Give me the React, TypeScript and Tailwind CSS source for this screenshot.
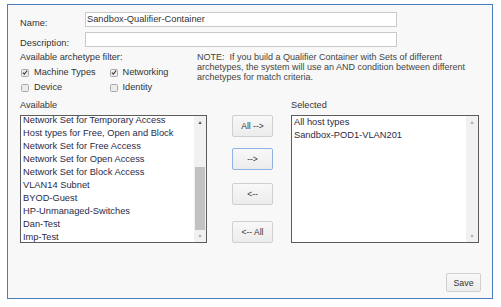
const available = [
  'Network Set for Temporary Access',
  'Host types for Free, Open and Block',
  'Network Set for Free Access',
  'Network Set for Open Access',
  'Network Set for Block Access',
  'VLAN14 Subnet',
  'BYOD-Guest',
  'HP-Unmanaged-Switches',
  'Dan-Test',
  'Imp-Test',
]

const selected = ['All host types', 'Sandbox-POD1-VLAN201']

function Checkbox({ checked, label }: { checked: boolean; label: string }) {
  return (
    <div className="flex items-center h-[15px] w-[90px]">
      <span className="ml-[1px] flex h-[8px] w-[8px] items-center justify-center rounded-[1.5px] border border-[#a9a9a9] bg-[#ececec]">
        {checked && (
          <svg width="7" height="7" viewBox="0 0 7 7">
            <path d="M1 3.6 L2.8 5.4 L6 1.2" fill="none" stroke="#3a3a3a" strokeWidth="1.3" />
          </svg>
        )}
      </span>
      <span className="ml-[5px] text-[9.2px] leading-[11px] text-[#333]">{label}</span>
    </div>
  )
}

function Scrollbar({ thumb, upDark }: { thumb: boolean; upDark: boolean }) {
  return (
    <div className="flex w-[12px] shrink-0 flex-col bg-[#f1f1f1]">
      <div className="flex h-[12px] items-center justify-center">
        <span className={`text-[5px] leading-none ${upDark ? 'text-[#505050]' : 'text-[#a8a8a8]'}`}>▲</span>
      </div>
      <div className="flex-1 px-[1px]">
        {thumb && <div className="mt-[39px] h-[63px] bg-[#c2c2c2]" />}
      </div>
      <div className="flex h-[12px] items-center justify-center">
        <span className="text-[5px] leading-none text-[#a8a8a8]">▼</span>
      </div>
    </div>
  )
}

function MoveButton({ label, focused, className }: { label: string; focused?: boolean; className?: string }) {
  return (
    <button
      type="button"
      className={`block h-[22px] w-[41px] rounded-[2px] border bg-gradient-to-b from-[#f8f8f8] to-[#ececec] text-[8.5px] leading-[10px] text-[#333] ${
        focused ? 'border-[#8fb3e3]' : 'border-[#d0d0d0]'
      } ${className ?? ''}`}
    >
      {label}
    </button>
  )
}

export default function App() {
  return (
    <div
      className="h-[307px] w-[501px] bg-white pl-[7px] pt-[4px]"
      style={{ fontFamily: '"Liberation Sans", Arial, sans-serif' }}
    >
      <div className="flex h-[295px] w-[486px] flex-col border border-[#4a7cbf] bg-[#f8f8f8] pl-[12px] pt-[7px]">
        <div className="flex">
          <div className="h-[15px] w-[65px] pt-[6px] text-[9.3px] leading-[11px] text-[#333]">Name:</div>
          <div className="flex h-[15px] w-[312px] items-center border border-[#c9c9c9] bg-white pl-[1px] text-[9.3px] text-[#333]">
            Sandbox-Qualifier-Container
          </div>
        </div>
        <div className="mt-[5px] flex">
          <div className="h-[15px] w-[65px] pt-[6px] text-[9.3px] leading-[11px] text-[#333]">Description:</div>
          <div className="h-[15px] w-[312px] border border-[#c9c9c9] bg-white" />
        </div>

        <div className="mt-[5px] flex">
          <div className="w-[177px]">
            <div className="text-[9.2px] leading-[10px] text-[#333]">Available archetype filter:</div>
            <div className="mt-[3px] flex">
              <Checkbox checked label="Machine Types" />
              <Checkbox checked label="Networking" />
            </div>
            <div className="flex">
              <Checkbox checked={false} label="Device" />
              <Checkbox checked={false} label="Identity" />
            </div>
          </div>
          <p className="w-[274px] text-[9px] leading-[10px] text-[#444]">
            NOTE:&nbsp; If you build a Qualifier Container with Sets of different archetypes, the system will use an AND
            condition between different archetypes for match criteria.
          </p>
        </div>

        <div className="mt-[5px] flex">
          <div className="w-[187px]">
            <div className="text-[9.2px] leading-[10px] text-[#333]">Available</div>
            <div className="mt-[5px] flex h-[128px] border border-[#5c5c5c] bg-white">
              <div className="flex-1 overflow-hidden">
                <div className="-mt-[2px] pl-[2px]">
                  {available.map((item) => (
                    <div key={item} className="h-[13px] text-[9.3px] leading-[13px] whitespace-nowrap text-[#2a2a48]">
                      {item}
                    </div>
                  ))}
                </div>
              </div>
              <Scrollbar thumb upDark />
            </div>
          </div>

          <div className="ml-[25px] mt-[15px] flex flex-col">
            <MoveButton label="All -->" />
            <MoveButton label="-->" focused className="mt-[11px]" />
            <MoveButton label="<--" className="mt-[13px]" />
            <MoveButton label="<-- All" className="mt-[16px]" />
          </div>

          <div className="ml-[18px] w-[188px]">
            <div className="text-[9.2px] leading-[10px] text-[#333]">Selected</div>
            <div className="mt-[5px] flex h-[128px] border border-[#5c5c5c] bg-white">
              <div className="flex-1 overflow-hidden pl-[2px]">
                {selected.map((item) => (
                  <div key={item} className="h-[13px] text-[9.3px] leading-[13px] whitespace-nowrap text-[#2a2a48]">
                    {item}
                  </div>
                ))}
              </div>
              <Scrollbar thumb={false} upDark={false} />
            </div>
          </div>
        </div>

        <div className="mt-[30px] flex w-[461px] justify-end">
          <button
            type="button"
            className="block h-[19px] w-[35px] rounded-[2px] border border-[#d0d0d0] bg-gradient-to-b from-[#f8f8f8] to-[#ececec] text-[8.8px] leading-[10px] text-[#333]"
          >
            Save
          </button>
        </div>
      </div>
    </div>
  )
}
